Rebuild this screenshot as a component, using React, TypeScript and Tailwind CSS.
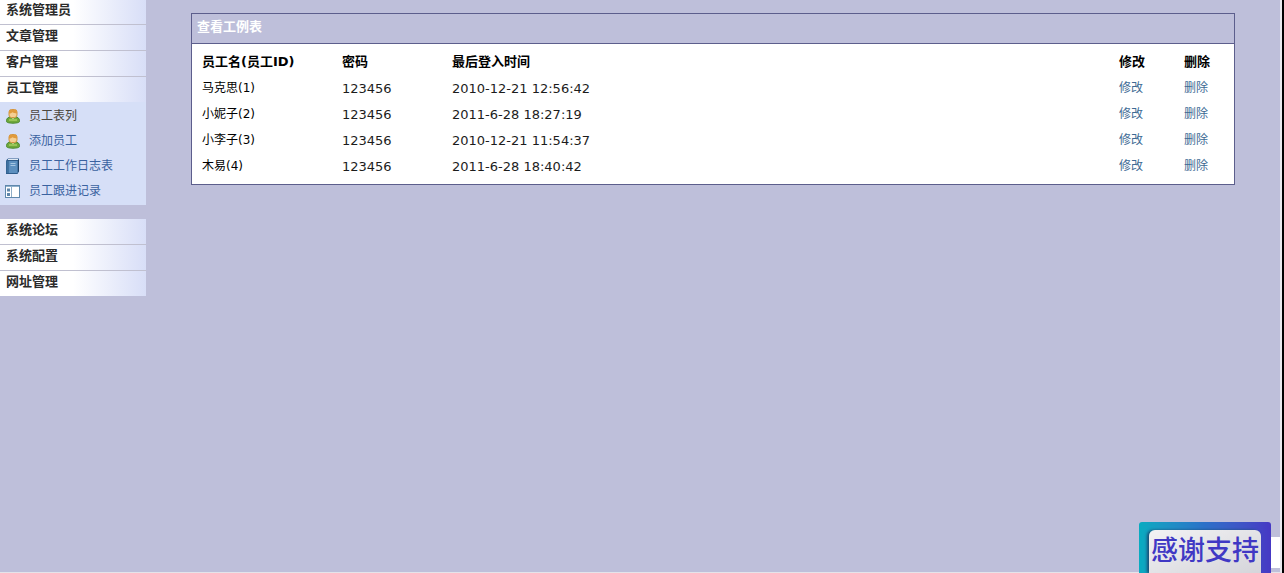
import type { ReactNode } from "react";

const employees = [
  { name: "马克思(1)", password: "123456", lastLogin: "2010-12-21 12:56:42" },
  { name: "小妮子(2)", password: "123456", lastLogin: "2011-6-28 18:27:19" },
  { name: "小李子(3)", password: "123456", lastLogin: "2010-12-21 11:54:37" },
  { name: "木易(4)", password: "123456", lastLogin: "2011-6-28 18:40:42" },
];

function UserIcon() {
  return (
    <svg width="16" height="16" viewBox="0 0 16 16" aria-hidden="true">
      <path d="M1.500 12.700c0-2.300 1.800-3.700 4-3.900h5c2.200.2 4 1.600 4 3.900v.8c0 .9-2.600 1.700-6.500 1.700s-6.500-.8-6.500-1.700z" fill="#6fa83a" stroke="#4b8a34" />
      <path d="M4 12h8" stroke="#a5cf62" strokeWidth="1.500" />
      <path d="M5.500 8.800 8 11l2.500-2.200z" fill="#f5e3bd" />
      <rect x="4" y="1.500" width="8" height="8" rx="2.500" fill="#f5cf94" stroke="#cf9440" />
      <path d="M4 5.500V3.800C4 2.200 5.500 1.500 8 1.500s4 .7 4 2.300v1.700C10 5.500 8.500 5 7.500 4.300 6.500 5.200 5.500 5.500 4 5.500z" fill="#e09a3c" />
    </svg>
  );
}

function BookIcon() {
  return (
    <svg width="16" height="16" viewBox="0 0 16 16" aria-hidden="true">
      <path d="M1 2.500 3 .5h11v13L12.500 16H1z" fill="#2f5d8c" />
      <path d="M3 1.500h10" stroke="#dfe9f3" />
      <rect x="3.500" y="3" width="9" height="12" fill="#5d90bf" />
      <rect x="1.500" y="3" width="2" height="12" fill="#3f719f" />
      <path d="M5.500 5.500h5M5.500 7.500h5" stroke="#a5c6e2" />
      <path d="M13.500 2v11.500" stroke="#1f4266" />
    </svg>
  );
}

function LayoutIcon() {
  return (
    <svg width="16" height="16" viewBox="0 0 16 16" aria-hidden="true">
      <rect x=".5" y="2.500" width="14" height="12" fill="#fff" stroke="#5f88ac" />
      <path d="M1 3.500h13" stroke="#8fb0cc" />
      <path d="M6.500 4v10" stroke="#8fadc8" />
      <rect x="2" y="5.500" width="3" height="3" fill="#5f86aa" />
      <rect x="2" y="10" width="3" height="3" fill="#5f86aa" />
    </svg>
  );
}

function MenuHeading({ children }: { children: ReactNode }) {
  return (
    <button
      type="button"
      className="block h-[25px] w-full bg-linear-to-r from-white from-50% to-[#d8def7] pr-1.5 pb-1 pl-1.5 text-left text-[13px] leading-5 font-bold text-[#2b2b2b]"
    >
      {children}
    </button>
  );
}

function MenuLink({ icon, color, children }: { icon: ReactNode; color: string; children: ReactNode }) {
  return (
    <li>
      <a href="#" className={`flex h-[25px] items-center gap-2 pl-[5px] ${color}`}>
        {icon}
        <span>{children}</span>
      </a>
    </li>
  );
}

function Sidebar() {
  return (
    <nav className="-mt-px w-[146px] shrink-0">
      <div className="flex flex-col gap-px bg-[#c0c0d0]">
        <MenuHeading>系统管理员</MenuHeading>
        <MenuHeading>文章管理</MenuHeading>
        <MenuHeading>客户管理</MenuHeading>
        <MenuHeading>员工管理</MenuHeading>
      </div>
      <ul className="bg-[#d6dff7] pt-px pb-0.5 text-[12px] leading-[18px]">
        <MenuLink icon={<UserIcon />} color="text-[#4b4640]">员工表列</MenuLink>
        <MenuLink icon={<UserIcon />} color="text-[#3a62a0]">添加员工</MenuLink>
        <MenuLink icon={<BookIcon />} color="text-[#3a62a0]">员工工作日志表</MenuLink>
        <MenuLink icon={<LayoutIcon />} color="text-[#3a62a0]">员工跟进记录</MenuLink>
      </ul>
      <div className="mt-3.5 flex flex-col gap-px bg-[#c0c0d0]">
        <MenuHeading>系统论坛</MenuHeading>
        <MenuHeading>系统配置</MenuHeading>
        <MenuHeading>网址管理</MenuHeading>
      </div>
    </nav>
  );
}

function EmployeePanel() {
  return (
    <section className="border border-[#5c5e8c] bg-white">
      <h1 className="h-[30px] border-b border-[#5c5e8c] bg-[#bebfda] pl-[5px] text-[13px] leading-[26px] font-bold text-white">
        查看工例表
      </h1>
      <table className="my-1 w-full table-fixed text-left text-[12px] leading-[18px] text-[#1c1c1c]">
        <colgroup>
          <col className="w-[145px]" />
          <col className="w-[110px]" />
          <col />
          <col className="w-[65px]" />
          <col className="w-[50px]" />
        </colgroup>
        <thead>
          <tr className="h-7 text-[13px] text-black">
            <th className="pl-2.5">员工名(员工ID)</th>
            <th className="pl-[5px]">密码</th>
            <th className="pl-[5px]">最后登入时间</th>
            <th>修改</th>
            <th>删除</th>
          </tr>
        </thead>
        <tbody>
          {employees.map((employee) => (
            <tr key={employee.name} className="h-[26px]">
              <td className="pb-0.5 pl-2.5 text-black">{employee.name}</td>
              <td className="pl-[5px] text-[13px]">{employee.password}</td>
              <td className="pl-[5px] text-[13px]">{employee.lastLogin}</td>
              <td className="pb-[3px]">
                <a href="#" className="text-[#3d6a94]">修改</a>
              </td>
              <td className="pb-[3px]">
                <a href="#" className="text-[#3d6a94]">删除</a>
              </td>
            </tr>
          ))}
        </tbody>
      </table>
    </section>
  );
}

export default function App() {
  return (
    <div className="flex min-h-screen border-r-2 border-black bg-[#bebfda] font-['DejaVu_Sans','Noto_Sans_CJK_SC',sans-serif]">
      <div className="flex flex-1 border-r-2 border-b border-r-[#e9e9ee] border-b-[#e4e4ea]">
        <Sidebar />
        <main className="flex-1 pt-[13px] pr-[45px] pl-[45px]">
          <EmployeePanel />
        </main>
      </div>
      <div className="fixed right-1 bottom-[5px] h-[31px] w-5 bg-white" />
      <button
        type="button"
        className="fixed right-[13px] bottom-0 h-[51px] w-[132px] rounded-t-[3px] bg-linear-to-r from-[#08abc0] via-[#2b70c8] to-[#4638c4] pt-2 pr-2.5 pl-2.5"
      >
        <span className="flex h-[43px] justify-center rounded-t-md bg-linear-to-br from-[#f2f2f4] to-[#d5d5da] text-[27px] leading-[42px] font-medium whitespace-nowrap text-[#4038c4] shadow-[-2px_0_3px_#1b4d74]">
          感谢支持
        </span>
      </button>
    </div>
  );
}
